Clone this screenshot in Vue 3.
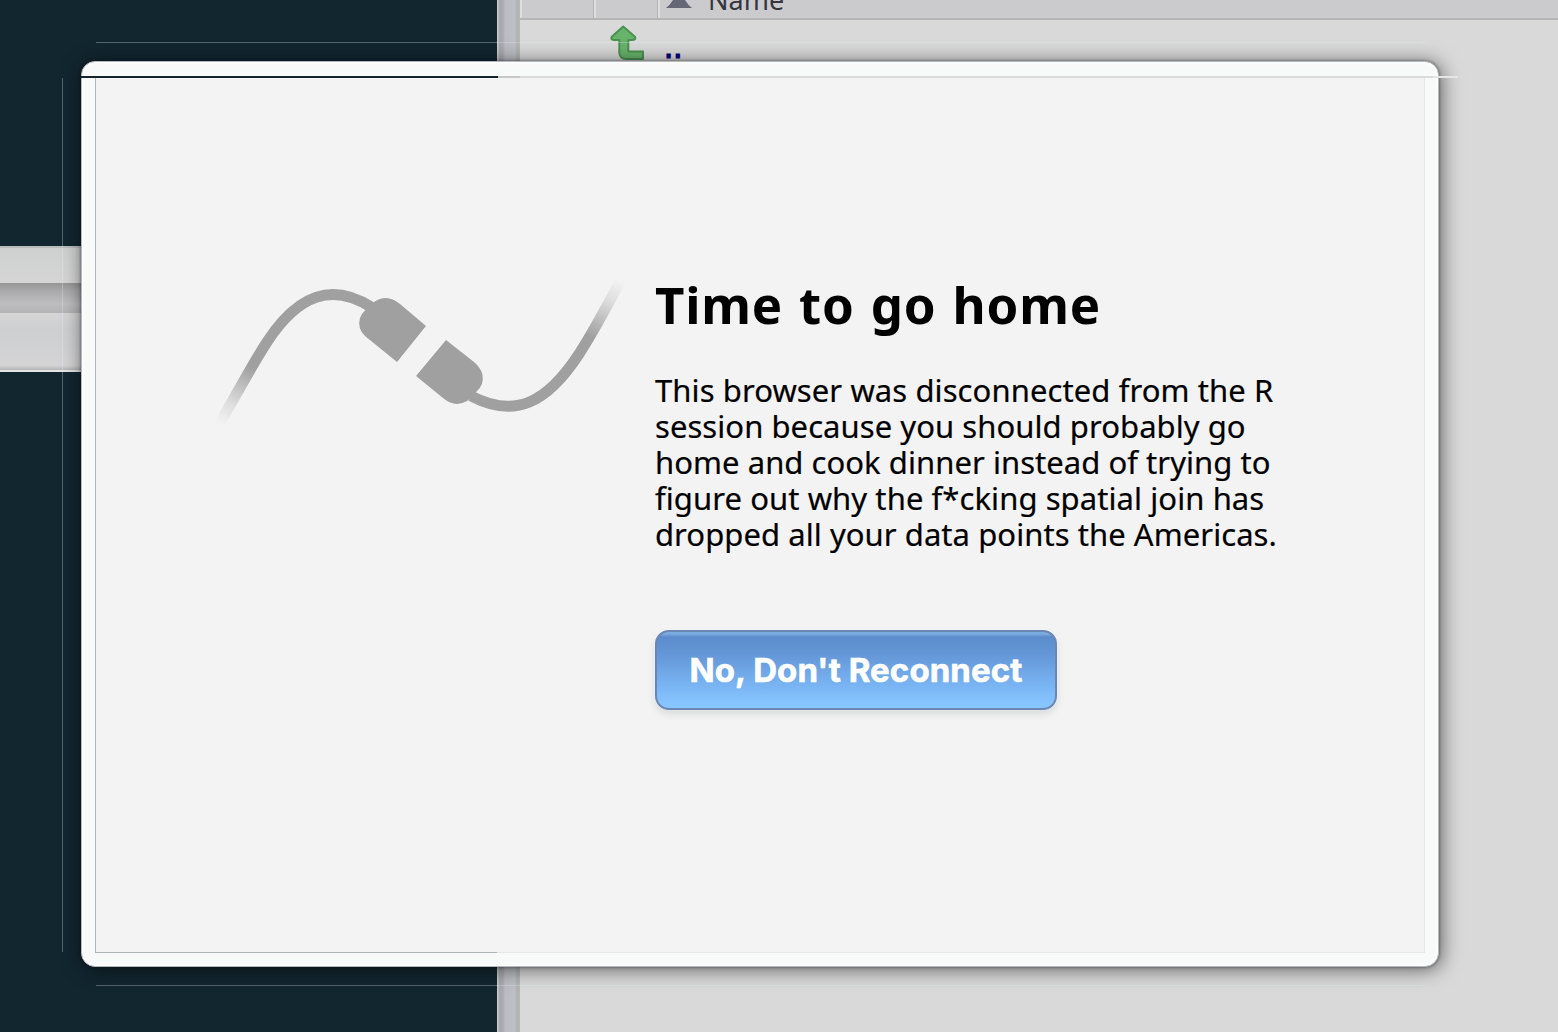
<script setup>
const message = [
  { text: 'This browser was disconnected from the R', spacing: 0.09 },
  { text: 'session because you should probably go', spacing: 0.06 },
  { text: 'home and cook dinner instead of trying to', spacing: 0.05 },
  { text: 'figure out why the f*cking spatial join has', spacing: 0.08 },
  { text: 'dropped all your data points the Americas.', spacing: 0.06 },
]
</script>

<template>
  <div class="screen">
    <div class="workspace">
      <div class="editor">
        <div class="bar upper"></div>
        <div class="bar divider"></div>
        <div class="bar lower"></div>
      </div>
      <div class="splitter"></div>
      <div class="files">
        <div class="table-head">
          <div class="col check"></div>
          <div class="col kind"></div>
          <div class="col name">
            <svg class="sort" width="28" height="8" viewBox="0 0 28 8"><path d="M0 8Q4 5 7 0H19Q22 5 26 8Z" fill="#656776" /></svg>
            <span>Name</span>
          </div>
        </div>
        <div class="row">
          <svg class="up" width="36" height="36" viewBox="0 0 36 36">
            <path d="M13.200 1.500 25.200 12Q26 15 22 15H18.300V26.500H33V34H16Q10 34 9.300 28V15H4Q0 15 2 11.500Z" fill="#68b36b" stroke="#4b914f" stroke-width="2" stroke-linejoin="round" />
          </svg>
          <span class="parent">..</span>
        </div>
      </div>
    </div>

    <i class="guide top"></i>
    <i class="guide bottom"></i>
    <i class="guide left"></i>

    <div class="dialog">
      <i class="seam dark"></i>
      <i class="seam light"></i>
      <div class="panel">
        <svg class="cable" width="420" height="170" viewBox="210 270 420 170">
          <defs>
            <linearGradient id="fadeLeft" gradientUnits="userSpaceOnUse" x1="219" y1="423" x2="250" y2="366">
              <stop offset="0" stop-color="#a0a0a0" stop-opacity="0" />
              <stop offset=".35" stop-color="#a0a0a0" stop-opacity=".25" />
              <stop offset="1" stop-color="#a0a0a0" />
            </linearGradient>
            <linearGradient id="fadeRight" gradientUnits="userSpaceOnUse" x1="621" y1="280" x2="591" y2="336">
              <stop offset="0" stop-color="#a0a0a0" stop-opacity="0" />
              <stop offset=".35" stop-color="#a0a0a0" stop-opacity=".25" />
              <stop offset="1" stop-color="#a0a0a0" />
            </linearGradient>
          </defs>
          <path d="M217 427C237 393 250 367 267 341C299 292 333 282 371 306" fill="none" stroke="url(#fadeLeft)" stroke-width="11" />
          <path d="M471 395C515 418 547 402 579 353C594 330 604 311 622 277" fill="none" stroke="url(#fadeRight)" stroke-width="11" />
          <path d="M426 325 397 361 365 335Q357 327 360 317Q362 312 365.500 309L374 301Q387 292 400 303Z" fill="#a0a0a0" />
          <path d="M446 339 416 375 443 397Q455 407 467 400L471 397Q473 396 477 390Q484 384 482.500 374Q481 367 474 361Z" fill="#a0a0a0" />
        </svg>
        <div class="content">
          <h1>Time to go home</h1>
          <p>
            <span v-for="line in message" :key="line.text" class="line" :style="{ letterSpacing: line.spacing + 'px' }">{{ line.text }}</span>
          </p>
          <button>No, Don't Reconnect</button>
        </div>
      </div>
    </div>
  </div>
</template>

<style>
body { margin: 0; }
</style>

<style scoped>
* { box-sizing: border-box; }
.screen { position: relative; width: 1558px; height: 1032px; overflow: hidden; background: #d9d9d9; font-family: "Noto Sans", sans-serif; }
.workspace { display: flex; height: 100%; }
.editor { width: 497px; padding-top: 246px; background: #12262f; }
.upper { height: 37px; border-top: 2px solid #b9bcbd; background: linear-gradient(#cfd0d0, #d5d5d5); }
.divider { height: 30px; background: linear-gradient(#969696, #a9a9ab 25%, #bebec0 70%, #b3b3b5); }
.lower { height: 59px; border-bottom: 2px solid #e3e4e5; background: linear-gradient(#d5d5d5, #cecfd1 30%, #d4d4d5 92%, #b4b4b5); }
.splitter { width: 23px; background: linear-gradient(90deg, #ccc 0 1px, #a7a8ab 2px, #aaabae 6px, #bbbcc1 8px, #bfc0c5 18px, #b1b2b3 20px, #b7b7b7); }
.files { flex: 1; background: #d9d9d9; }
.table-head { display: flex; height: 20px; overflow: hidden; background: #cbcbce; border-bottom: 2px solid #b6b6b7; }
.col { height: 19px; border-left: 2px solid #dededf; }
.check { width: 74px; border-right: 1px solid #b3b3b6; }
.kind { width: 64px; border-right: 1px solid #b3b3b6; }
.name { flex: 1; display: flex; align-items: flex-start; padding-left: 6px; }
.name span { margin: -18px 0 0 14px; font-size: 27px; line-height: 36px; letter-spacing: 0; color: #35363f; }
.row { display: flex; padding: 5px 0 0 90px; }
.parent { margin: 4px 0 0 17.500px; font: 32px/36px "DejaVu Sans", sans-serif; letter-spacing: -.8px; color: #00007c; -webkit-text-stroke: 1px #00007c; }
.guide { position: absolute; background: rgba(220, 235, 240, .32); }
.top { left: 96px; top: 42px; width: 1329px; height: 1px; }
.bottom { left: 96px; top: 985px; width: 1329px; height: 1px; }
.left { left: 62px; top: 78px; width: 1px; height: 874px; }
.dialog { position: absolute; left: 81px; top: 61px; width: 1358px; height: 906px; padding: 15px 13px 14px 14px; border: 1px solid #b4b8bd; border-radius: 14px; background: #f8f9f9; box-shadow: inset 0 0 4px 1px #fff, 0 0 3px rgba(20, 20, 35, .55), 2px 2px 20px rgba(0, 0, 0, .58); }
.seam { position: absolute; top: 14px; height: 2px; }
.seam.dark { left: -1px; width: 417px; background: #17232a; }
.seam.light { left: 416px; width: 960px; background: linear-gradient(90deg, #c6c7c8 0 22px, #dadcdb 22px 935px, #e5e5e5 935px); }
.panel { display: flex; height: 876px; margin-left: -1px; padding: 193px 0 0 114px; border: 1px solid #e5e8e9; border-left-color: #afb7bc; background: linear-gradient(90deg, #adb4b6 401px, #e5e9e8 401px) bottom / 100% 1px no-repeat, #f3f3f3; border-bottom: 0; }
.cable { flex: none; }
.content { margin-left: 25px; color: #000; }
h1 { margin: -2px 0 0; font-size: 51px; line-height: 70px; font-weight: 700; letter-spacing: .8px; word-spacing: 2px; white-space: nowrap; }
p { margin: 33px 0 0; font-size: 31px; line-height: 36px; -webkit-text-stroke: .2px #000; }
.line { display: block; white-space: nowrap; }
button { display: block; width: 402px; height: 80px; margin: 78px 0 0; padding: 0; border: 2px solid #6d87b5; border-radius: 14px; background: linear-gradient(#79acdf 0 2px, #5c8ccb 5px, #6396d6 28%, #75aeee 62%, #86c5ff 94%); box-shadow: 0 4px 7px rgba(70, 80, 80, .15), 0 0 3px #fff; color: #fff; font: 700 33px Inter, sans-serif; letter-spacing: .1px; -webkit-text-stroke: .6px #fff; white-space: nowrap; }
</style>
